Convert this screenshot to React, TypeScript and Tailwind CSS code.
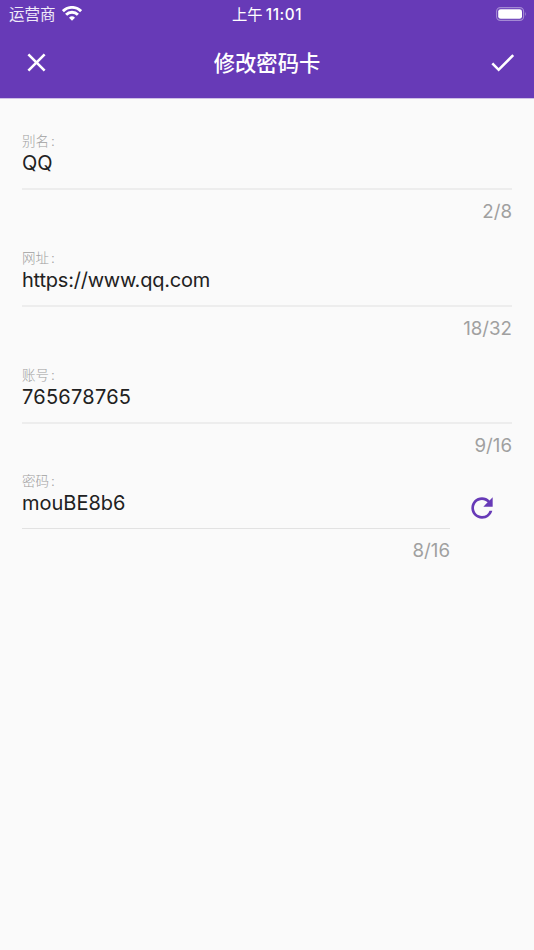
import { MdClose, MdCheck, MdRefresh } from "react-icons/md";

type FieldProps = {
  label: string;
  value: string;
  count: string;
  className?: string;
  valueClass?: string;
  lineClass?: string;
  countClass?: string;
};

function Field({
  label,
  value,
  count,
  className = "",
  valueClass = "",
  lineClass = "h-[2px] bg-[#ededed]",
  countClass = "mt-[9px] h-[25px]",
}: FieldProps) {
  return (
    <div className={`flex flex-col ${className}`}>
      <div className="h-[18px] text-[13.5px] font-light leading-[18px] text-[#a0a0a0]">
        {label}
        <span className="ml-[2px]">:</span>
      </div>
      <div className={`h-[26px] text-[20px] leading-[26px] text-[#212121] ${valueClass}`}>{value}</div>
      <div className="mt-[12px] h-[2px]">
        <div className={lineClass} />
      </div>
      <div className={`text-right text-[18.7px] leading-[26px] text-[#a0a0a0] ${countClass}`}>{count}</div>
    </div>
  );
}

export default function App() {
  return (
    <div className="flex h-[950px] w-[534px] flex-col bg-[#fafafa] font-['Inter','Noto_Sans_CJK_SC',sans-serif]">
      <header className="h-[99px] border-b border-[#cebfe6] bg-[#673ab7] bg-clip-padding text-white">
        <div className="grid h-[28px] grid-cols-3 items-center pl-[9px] pr-[7px]">
          <div className="flex items-center gap-[6px] text-[15.5px] leading-[20px]">
            <span className="mt-[1px] text-white/90">运营商</span>
            <svg className="-mt-[2px]" width="20" height="15" viewBox="0 0 20 15" fill="none" stroke="white" strokeWidth="2.9">
              <path d="M.9 5.2A12.8 12.8 0 0 1 19.1 5.2" />
              <path d="M4.1 8.8A8.2 8.2 0 0 1 15.9 8.8" />
              <path d="M10 14.7 7 11.7a4.3 4.3 0 0 1 6 0Z" fill="white" stroke="none" />
            </svg>
          </div>
          <div className="-ml-[2px] mt-[1px] whitespace-nowrap text-center text-[15.3px] leading-[20px]">
            上午 <span className="-ml-[1px] font-medium tracking-[0.55px]">11:01</span>
          </div>
          <svg className="-mt-[1px] justify-self-end" width="31" height="14" viewBox="0 0 31 14">
            <rect x=".6" y=".6" width="27" height="12.8" rx="3.8" fill="none" stroke="#a48ad4" strokeWidth="1.1" />
            <rect x="2.2" y="2.2" width="23.8" height="9.6" rx="2.4" fill="white" />
            <path d="M29 4.7q1.8 2.3 0 4.6Z" fill="#a48ad4" />
          </svg>
        </div>
        <div className="grid h-[69px] grid-cols-[1fr_auto_1fr] items-center pl-[21px] pr-[16px]">
          <MdClose size={31} />
          <div className="-ml-[5px] text-[21.3px] font-medium leading-[30px]">修改密码卡</div>
          <MdCheck className="justify-self-end" size={31} />
        </div>
      </header>
      <main className="flex flex-col px-[22px] pt-[33px]">
        <Field label="别名" value="QQ" count="2/8" valueClass="tracking-[-0.1px]" />
        <Field className="mt-[25px]" label="网址" value="https://www.qq.com" count="18/32" valueClass="tracking-[-0.22px]" />
        <Field className="mt-[25px]" label="账号" value="765678765" count="9/16" valueClass="tracking-[0.25px]" />
        <div className="mt-[14px] flex">
          <Field
            className="w-[428px]"
            label="密码"
            value="mouBE8b6"
            count="8/16"
            lineClass="h-px bg-[#e2e2e2]"
            countClass="mt-[8px] h-[26px]"
          />
          <MdRefresh className="ml-[16px] mt-[20px]" size={32} color="#673ab7" />
        </div>
      </main>
    </div>
  );
}
